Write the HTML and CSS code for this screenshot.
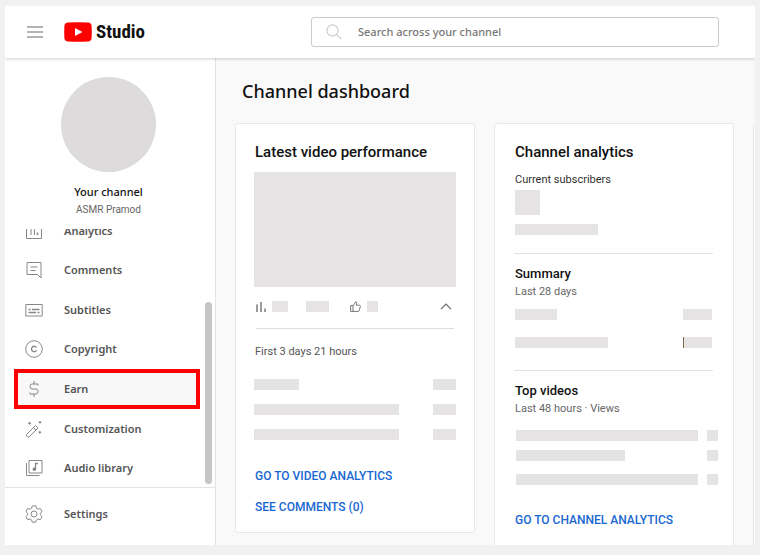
FILE: index.html
```html
<!DOCTYPE html>
<html lang="en">
<head>
<meta charset="utf-8">
<title>Channel dashboard - Studio</title>
<link rel="stylesheet" href="styles.css">
</head>
<body>
<div class="app">
  <header class="topbar">
    <button class="menu" type="button" aria-label="Menu">
      <svg width="16" height="12" viewBox="0 0 16 12"><path d="M0 1h16M0 6h16M0 11h16" stroke="#9b9b9b" stroke-width="1.3"/></svg>
    </button>
    <a class="logo" href="#">
      <svg width="28" height="20" viewBox="0 0 28 20"><path d="M4 .4Q14-.1 24 .4Q27.300.6 27.600 4Q28 10 27.600 16Q27.300 19.400 24 19.600Q14 20.100 4 19.600Q.7 19.400.4 16Q0 10 .4 4Q.7.6 4 .4Z" fill="#f00"/><path d="M11 6l7.500 4-7.500 4z" fill="#fff"/></svg>
      <span class="wordmark">Studio</span>
    </a>
    <label class="search">
      <svg width="16" height="16" viewBox="0 0 16 16" fill="none" stroke="#c9c9c9" stroke-width="1.1"><circle cx="6.500" cy="6.500" r="5.600"/><path d="M10.600 10.600L15.300 15"/></svg>
      <input type="search" aria-label="Search" placeholder="Search across your channel">
    </label>
  </header>
  <div class="body">
    <aside class="sidebar">
      <div class="profile">
        <div class="avatar"></div>
        <div class="profile-title">Your channel</div>
        <div class="profile-name">ASMR Pramod</div>
      </div>
      <nav class="nav">
        <div class="nav-list">
          <a class="item" href="#"><svg class="icon" viewBox="0 0 18 18"><path d="M1.500 1.500h15v15h-15zM6 6v7M9.500 6v7"/><path d="M12.500 10.500v2.500" stroke-width="1.600"/></svg>Analytics</a>
          <a class="item" href="#"><svg class="icon" viewBox="0 0 18 18"><path d="M2 1.500h14v15.500l-3.500-3.500H2zM5.500 6h7M5.500 9.500h5"/></svg>Comments</a>
          <a class="item" href="#"><svg class="icon" viewBox="0 0 18 18"><path d="M.8 3.500h16.400v11.500H.8z"/><path d="M3.500 8.500h2M7 8.500h7.500M3.500 11.500h7.500M12.500 11.500h2" stroke-width="1.300"/></svg>Subtitles</a>
          <a class="item" href="#"><svg class="icon" viewBox="0 0 18 18"><circle cx="9" cy="9" r="8.300"/><path d="M11.500 7.600A2.700 2.700 0 1 0 11.500 10.400" stroke-width="1.400"/></svg>Copyright</a>
          <a class="item current" href="#"><svg class="icon" viewBox="0 0 18 18"><path d="M9 1v3M9 14v3M13 5.500V4H7Q5 4 5 6.500T7 9h4Q13 9 13 11.500T11 14H5v-1.500"/></svg>Earn</a>
          <a class="item" href="#"><svg class="icon" viewBox="0 0 18 18"><path d="M1.500 14.500L10.500 5.500l2.500 2.500L4 17Q3 17.300 1.500 16ZM8.500 7.500l2.500 2.500"/><path d="M4.500 2v2.600M3.200 3.300h2.600M15 1v2.600M13.700 2.300h2.600M14.800 11v2.600M13.500 12.300h2.600" stroke-width="1.200"/></svg>Customization</a>
          <a class="item" href="#"><svg class="icon" viewBox="0 0 18 18"><path d="M4 1.500h13v12.500H4zM1.500 4v12.500h13"/><path d="M10.500 10V4.500H13" stroke-width="1.300"/><circle cx="9.300" cy="10.200" r="1.300" fill="#777"/></svg>Audio library</a>
        </div>
        <div class="thumb"></div>
      </nav>
      <div class="foot">
        <a class="item" href="#"><svg class="icon" viewBox="0 0 18 18"><path d="M7.200.9h3.600l.6 2.400 1.500.9 2.400-.7 1.800 3.100-1.800 1.700v1.600l1.800 1.700-1.800 3.100-2.400-.7-1.500.9-.6 2.300H7.200l-.6-2.300-1.500-.9-2.400.7-1.800-3.100 1.800-1.700V8.300L.9 6.600l1.800-3.100 2.400.7 1.500-.9z" stroke-linejoin="round"/><circle cx="9" cy="9" r="3"/></svg>Settings</a>
      </div>
    </aside>
    <main class="main">
      <h1>Channel dashboard</h1>
      <div class="cards">
        <section class="card">
          <h2>Latest video performance</h2>
          <div class="video"></div>
          <div class="stats">
            <svg width="10" height="10" viewBox="0 0 10 10" stroke="#666" stroke-width="1.300"><path d="M1 2.500V10M5 0V10M9 6.500V10"/></svg>
            <i class="ph w16"></i>
            <i class="ph w23"></i>
            <svg class="like" width="11" height="11" viewBox="0 0 11 11" fill="none" stroke="#777"><path d="M.6 4.600H3v5.800H.6zM3 4.800L5.800.7Q7.200.9 6.600 2.800L6.300 4.200h3.200Q10.700 4.500 10.300 5.700L9.200 9.600Q9 10.400 8 10.400H3"/></svg>
            <i class="ph w11"></i>
            <button class="collapse" type="button" aria-label="Collapse"><svg width="12" height="7" viewBox="0 0 12 7" fill="none" stroke="#666" stroke-width="1.200"><path d="M1 6.200l5-5 5 5"/></svg></button>
          </div>
          <p class="period">First 3 days 21 hours</p>
          <div class="rows video-rows">
            <div class="row"><i class="ph w45"></i><i class="ph w23"></i></div>
            <div class="row"><i class="ph w145"></i><i class="ph w23"></i></div>
            <div class="row"><i class="ph w145"></i><i class="ph w23"></i></div>
          </div>
          <a class="action" href="#">GO TO VIDEO ANALYTICS</a>
          <a class="action" href="#">SEE COMMENTS (0)</a>
        </section>
        <section class="card tall">
          <h2>Channel analytics</h2>
          <p class="label">Current subscribers</p>
          <div class="count"></div>
          <i class="ph w83"></i>
          <div class="group">
            <h3>Summary</h3>
            <p class="sub">Last 28 days</p>
            <div class="rows summary-rows">
              <div class="row"><i class="ph w42"></i><i class="ph w29"></i></div>
              <div class="row"><i class="ph w93"></i><i class="ph w29 mark"></i></div>
            </div>
          </div>
          <div class="group">
            <h3>Top videos</h3>
            <p class="sub">Last 48 hours · Views</p>
            <div class="rows top-rows">
              <div class="row"><i class="ph w182"></i><i class="ph w11"></i></div>
              <div class="row"><i class="ph w109"></i><i class="ph w11"></i></div>
              <div class="row"><i class="ph w182"></i><i class="ph w11"></i></div>
            </div>
          </div>
          <a class="action" href="#">GO TO CHANNEL ANALYTICS</a>
        </section>
        <section class="card next"></section>
      </div>
    </main>
  </div>
</div>
</body>
</html>
```
FILE: styles.css
```css
* { box-sizing: border-box; }
body {
  margin: 0;
  background: #f1f1f1;
  font-family: Roboto, "Liberation Sans", sans-serif;
  color: #111;
}
h1, h2, h3, p { margin: 0; font-weight: 500; }
a { color: inherit; text-decoration: none; }
button { padding: 0; border: 0; background: none; display: flex; }
svg { display: block; flex: none; }

.app {
  height: 100vh;
  padding: 6px 5px 10px;
  display: flex;
  flex-direction: column;
}
.topbar {
  position: relative;
  z-index: 1;
  flex: none;
  height: 52px;
  padding: 0 36px 0 22px;
  display: flex;
  align-items: center;
  background: #fff;
  box-shadow: 0 1px 3px rgba(0, 0, 0, .2);
  clip-path: inset(0 0 -5px 0);
}
.logo {
  margin-left: 21px;
  display: flex;
  align-items: center;
  gap: 4px;
}
.wordmark {
  font-family: "Roboto Condensed", "Open Sans Condensed", Roboto, sans-serif;
  font-size: 19px;
  line-height: 24px;
  font-weight: 700;
}
.search {
  flex: 0 1 408px;
  margin-left: auto;
  height: 30px;
  padding: 0 14px;
  display: flex;
  align-items: center;
  gap: 16px;
  border: 1px solid #ccc;
  border-radius: 3px;
}
.search input {
  flex: 1;
  min-width: 0;
  padding: 0;
  border: 0;
  outline: 0;
  background: none;
  font: 500 11px/16px "Noto Sans", sans-serif;
}
.search input::placeholder { color: #777; opacity: 1; }

.body { flex: 1; min-height: 0; display: flex; }
.sidebar {
  flex: none;
  width: 211px;
  display: flex;
  flex-direction: column;
  background: #fff;
  border-right: 1px solid #e3e3e3;
  font-family: "Noto Sans", sans-serif;
}
.profile {
  flex: none;
  height: 171px;
  padding: 19px 3px 0 0;
  display: flex;
  flex-direction: column;
  align-items: center;
}
.avatar {
  width: 95px;
  height: 95px;
  margin-bottom: 11px;
  border-radius: 50%;
  background: #dddbdc;
}
.profile-title { font-size: 11px; line-height: 18px; font-weight: 500; }
.profile-name {
  font-family: Roboto, sans-serif;
  font-size: 10px;
  line-height: 18px;
  color: #666;
}
.nav {
  position: relative;
  flex: 1;
  min-height: 0;
  overflow: hidden;
  display: flex;
  flex-direction: column;
  justify-content: flex-end;
}
.nav-list {
  flex: none;
  height: 277px;
  margin-bottom: -1px;
  display: grid;
  grid-auto-rows: 1fr;
}
.thumb {
  position: absolute;
  right: 3px;
  bottom: 3px;
  width: 7px;
  height: 182px;
  border-radius: 4px;
  background: #c6c6c6;
}
.item {
  margin: 0 15px 0 9px;
  padding: 0 7px;
  display: flex;
  align-items: center;
  gap: 21px;
  border: 4px solid transparent;
  font-size: 11px;
  line-height: 16px;
  font-weight: 600;
  color: #555;
}
.item.current { border-color: #f00; background: #f8f8f8; }
.icon {
  width: 18px;
  height: 18px;
  fill: none;
  stroke: #888;
  stroke-width: 1;
}
.foot {
  flex: none;
  height: 58px;
  padding-top: 6px;
  border-top: 1px solid #e3e3e3;
}
.foot .item { height: 40px; }

.main {
  flex: 1;
  min-width: 0;
  padding: 18px 0 0 19px;
  overflow: hidden;
  background: #f9f9f9;
}
h1 {
  padding-left: 7px;
  font-family: "Noto Sans", sans-serif;
  font-size: 18px;
  line-height: 30px;
}
.cards {
  margin-top: 17px;
  display: grid;
  grid-template-columns: repeat(3, 240px);
  gap: 19px;
  align-items: start;
}
.card {
  padding: 19px 18px 10px;
  display: flex;
  flex-direction: column;
  background: #fff;
  border: 1px solid #e8e8e8;
  border-radius: 3px;
}
.tall, .next { min-height: 440px; }
.tall { padding: 19px 21px 19px 20px; }
h2 { font-size: 15px; line-height: 18px; }
h3 { font-size: 13px; line-height: 18px; }
.card:not(.tall) h2 { padding-left: 1px; }
.video { height: 115px; margin-top: 11px; background: #e6e3e4; }
.ph { flex: none; height: 11px; background: #e6e3e4; }
.w11 { width: 11px; }
.w16 { width: 16px; }
.w23 { width: 23px; }
.w29 { width: 29px; }
.w42 { width: 42px; }
.w45 { width: 45px; }
.w83 { width: 83px; }
.w93 { width: 93px; }
.w109 { width: 109px; }
.w145 { width: 145px; }
.w182 { width: 182px; }
.mark { border-left: 1px solid #7d6a4d; }
.stats {
  height: 42px;
  margin: 0 2px;
  padding: 0 2px 2px 0;
  display: flex;
  align-items: center;
  border-bottom: 1px solid #ddd;
}
.stats .w16 { margin: 0 18px 0 6px; }
.stats .like { margin: 0 6px 0 21px; }
.collapse { margin-left: auto; }
.period {
  margin: 14px 1px 0;
  font-size: 11px;
  line-height: 18px;
  font-weight: 400;
  color: #555;
}
.rows { display: flex; flex-direction: column; }
.row { display: flex; justify-content: space-between; }
.video-rows { gap: 14px; margin: 18px 0 20px; }
.action {
  margin-left: 1px;
  padding: 8px 0 7px;
  font-size: 12px;
  line-height: 16px;
  font-weight: 500;
  color: #1967d2;
}
.tall .action { margin: 19px 0 0; }
.label { margin-top: 10px; font-size: 11px; line-height: 18px; font-weight: 400; color: #333; }
.count { width: 25px; height: 25px; margin: 1px 0 9px; background: #e6e3e4; }
.group { margin: 18px -1px 0; padding: 11px 1px 0; border-top: 1px solid #e3e3e3; }
.group + .group { margin-top: 22px; }
.sub { font-size: 11px; line-height: 18px; font-weight: 400; color: #666; }
.summary-rows { gap: 17px; margin-top: 8px; }
.top-rows { gap: 9px; margin: 12px -6px 0 1px; }
.top-rows .row:last-child { margin-top: 4px; }
```
